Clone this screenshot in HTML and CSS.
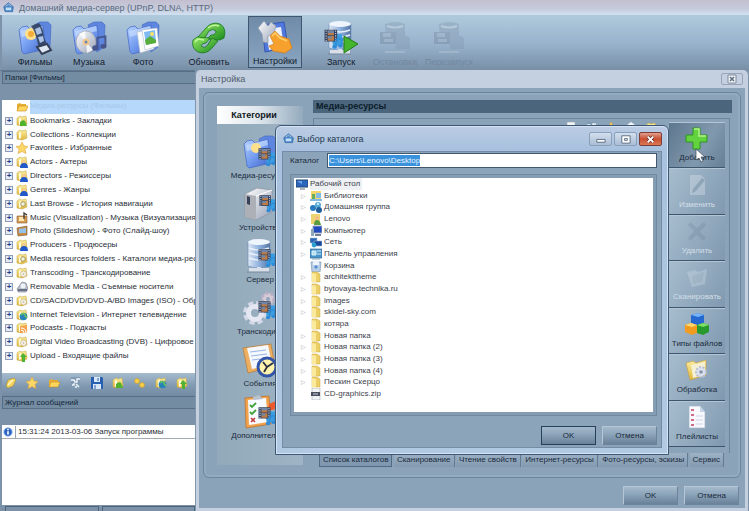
FILE: index.html
```html
<!DOCTYPE html>
<html lang="ru">
<head>
    <meta charset="UTF-8">
    <meta name="viewport" content="width=device-width, initial-scale=1.0">
    <title>Домашний медиа-сервер (UPnP, DLNA, HTTP)</title>
    <link rel="stylesheet" href="styles.css">
</head>
<body>
    <!-- Icon sprites -->
    <svg class="sprites" width="0" height="0" aria-hidden="true">
        <defs>
            <linearGradient id="gBlue" x1="0" y1="0" x2="1" y2="1"><stop offset="0" stop-color="#b9d4ff"/><stop offset=".5" stop-color="#739cf0"/><stop offset="1" stop-color="#3c5fc4"/></linearGradient>
            <linearGradient id="gGreen" x1="0" y1="0" x2="1" y2="1"><stop offset="0" stop-color="#9bec6a"/><stop offset="1" stop-color="#188a1c"/></linearGradient>
            <linearGradient id="gYellow" x1="0" y1="0" x2="0" y2="1"><stop offset="0" stop-color="#fbeea0"/><stop offset="1" stop-color="#e0b63c"/></linearGradient>
            <linearGradient id="gGrey" x1="0" y1="0" x2="1" y2="1"><stop offset="0" stop-color="#ffffff"/><stop offset="1" stop-color="#98a2b6"/></linearGradient>
            <linearGradient id="gSteel" x1="0" y1="0" x2="1" y2="0"><stop offset="0" stop-color="#dde6f2"/><stop offset=".5" stop-color="#8fb2de"/><stop offset="1" stop-color="#5474a4"/></linearGradient>
        </defs>
        <symbol id="folder" viewBox="0 0 36 36">
            <path d="M17 5l6-3 8 0 3 3-1 22-7 5z" fill="#5f86de" stroke="#4267bd" stroke-width=".6"/>
            <path d="M2 10l3-3 5-1 3 3 13-4 3 24-22 5-2-2z" fill="url(#gBlue)" stroke="#4a6dc8" stroke-width=".8"/>
            <path d="M4 11l21-5 1 5-21 6z" fill="#cfe2ff" opacity=".6"/>
        </symbol>
        <symbol id="film" viewBox="0 0 20 20">
            <path d="M2 1h16v15H2z" fill="#33405c"/>
            <path d="M6 2h8v6H6zM6 9h8v6H6z" fill="#bd7b45"/>
            <path d="M6 2h8v3H6zM6 9h5v3H6z" fill="#6c86ac"/>
            <path d="M4 2v14M16 2v14" stroke="#c9d4e6" stroke-width="1.4" stroke-dasharray="1.5 1.5"/>
        </symbol>
        <symbol id="note" viewBox="0 0 20 20">
            <path d="M8 15V3l10-2v12" fill="none" stroke="currentColor" stroke-width="2.4"/>
            <ellipse cx="5.5" cy="15.5" rx="4" ry="3.2" fill="currentColor"/>
            <ellipse cx="15.5" cy="13.5" rx="3.8" ry="3" fill="currentColor"/>
        </symbol>
        <symbol id="movies" viewBox="0 0 36 36">
            <use href="#folder"/>
            <circle cx="14" cy="14" r="6" fill="#ffe08c"/><circle cx="14" cy="14" r="3" fill="#f5ab3a"/>
            <path d="M14 6l8-3c5 6 4 10 5 14 1 4 3 6 4 9l-8 3c-3-5-2-8-4-12-1-4-2-7-5-11z" fill="#34435f" opacity=".9"/>
            <path d="M18 9l5-2 2 6-5 2zM21 17l5-1 1 5-4 2z" fill="#a9c2e6"/>
            <path d="M20 27l10-3 4 6-9 4z" fill="#dfe7f2" stroke="#35415b" stroke-width="2"/>
        </symbol>
        <symbol id="music" viewBox="0 0 36 36">
            <use href="#folder"/>
            <ellipse cx="15" cy="22" rx="10" ry="11" fill="url(#gGrey)" stroke="#9f9da5" stroke-width=".7"/>
            <path d="M15 22L8 14l6-3zM15 22l7 8-6 3z" fill="#fff" opacity=".8"/>
            <circle cx="15" cy="22" r="3.5" fill="#f3c98d"/><circle cx="15" cy="22" r="1.5" fill="#7187b5"/>
            <use href="#note" x="20" y="14" width="16" height="19" color="#46558c"/>
        </symbol>
        <symbol id="photo" viewBox="0 0 36 36">
            <use href="#folder"/>
            <path d="M12 12l15-3 2 20-14 4z" fill="#f8fafc" stroke="#aab8c8" stroke-width=".6"/>
            <path d="M17 10l15-2 2 18-14 4z" fill="#fff" stroke="#aab8c8" stroke-width=".6"/>
            <path d="M19 12l11-2 1 12-10 3z" fill="#7dbbf2"/>
            <path d="M20 20l5-4 6 4v3l-10 2z" fill="#56ad3b"/><circle cx="27" cy="14" r="2" fill="#f8e167"/>
        </symbol>
        <symbol id="refresh" viewBox="0 0 36 36">
            <path d="M15 8q6-7 14-4 7 4 4 14l-4 2-13-1 4-4q5 0 5-4-3-3-7 0l-5 8-6-2z" fill="url(#gGreen)" stroke="#167621" stroke-width=".8"/>
            <path d="M21 28q-6 7-14 4-7-4-5-12l4-3 13 1-4 5q-4 0-5 3 3 3 6 0l5-8 6 3z" fill="url(#gGreen)" stroke="#167621" stroke-width=".8"/>
            <path d="M17 8q5-4 11-2M4 22l3-3 6 1" fill="none" stroke="#c3f79c" stroke-width="1.5"/>
        </symbol>
        <symbol id="settings" viewBox="0 0 36 36">
            <path d="M5 6l22-3 4 25-23 5z" fill="#5178dc" stroke="#3658b4"/>
            <path d="M9 10l15-2 3 20-15 3z" fill="#eef4ff"/>
            <path d="M1 9l6-7 4 5 3-4 5 4-2 7-6 3v7l-5-1-1-8z" fill="url(#gGrey)" stroke="#8897ab" stroke-width=".7"/>
            <path d="M13 17l5-5 5 5 9 3 3 9-7 5-12-2-4-5 5-2z" fill="#f6a02d" stroke="#d87d18" stroke-width=".7"/>
            <path d="M15 17l3-3 5 5 7 3" fill="none" stroke="#ffd06a" stroke-width="1.5"/>
        </symbol>
        <symbol id="tower" viewBox="0 0 36 36">
            <path d="M6 4q12-4 22 0v24q-11 4-22 0z" fill="url(#gSteel)" stroke="#6889b6" stroke-width=".6"/>
            <ellipse cx="17" cy="4" rx="11" ry="3" fill="#eff5fc"/>
            <path d="M7 10q10 4 20 0M7 15q10 4 20 0M7 20q10 4 20 0" fill="none" stroke="#e8f1fc" stroke-width="1.5"/>
            <path d="M7 32h20M17 29v5" stroke="#d8dfe8" stroke-width="4"/>
            <path d="M5 34h23" stroke="#77859c"/>
        </symbol>
        <symbol id="media" viewBox="0 0 20 20">
            <path d="M8 5h10l1 8-9 5z" fill="#3a9de0"/>
            <use href="#film" width="15" height="15"/>
            <use href="#note" x="8" y="8" width="11" height="12" color="#2e8bd8"/>
        </symbol>
        <symbol id="start" viewBox="0 0 36 36">
            <use href="#tower"/><use href="#media" x="0" y="9" width="21" height="21"/>
            <path d="M21 16l14 8-14 9z" fill="#45b52d" stroke="#247c1b"/>
        </symbol>
        <symbol id="stop" viewBox="0 0 36 36">
            <g opacity=".32">
                <path d="M8 4q11-4 20 0v11l5 3v11H19v-5H9z" fill="#7e92a6"/>
                <path d="M3 12h16v12H3z" fill="#67798c"/><path d="M6 13h8v4H6zM7 19h9v3H7z" fill="#9db0c2"/>
                <path d="M8 32h20" stroke="#c9d4de" stroke-width="2"/><path d="M10 6q8 3 16 0" fill="none" stroke="#d5dee6" stroke-width="2"/>
            </g>
        </symbol>
        <symbol id="device" viewBox="0 0 36 36">
            <path d="M3 8l12-6 15 2v22l-16 8-11-3z" fill="url(#gGrey)" stroke="#8a8f9d" stroke-width=".7"/>
            <path d="M3 8l11 2v24L3 31z" fill="#aeb0b8"/><path d="M5 10l3 1v8l-3-1z" fill="#38415a"/><path d="M14 10l16-6" stroke="#fff"/>
            <use href="#media" x="16" y="8" width="19" height="20"/>
        </symbol>
        <symbol id="mediafolder" viewBox="0 0 36 36"><use href="#folder"/><circle cx="14" cy="14" r="5" fill="#ffe08c"/><use href="#media" x="15" y="13" width="20" height="21"/></symbol>
        <symbol id="server" viewBox="0 0 36 36"><use href="#tower"/><use href="#media" x="15" y="10" width="20" height="21"/></symbol>
        <symbol id="gears" viewBox="0 0 36 36">
            <circle cx="26" cy="9" r="6" fill="#d8cbd8" stroke="#b7aec4" stroke-width="3" stroke-dasharray="3 2"/><circle cx="26" cy="9" r="2" fill="#8fa6bb"/>
            <circle cx="13" cy="23" r="10" fill="none" stroke="#d4d8e8" stroke-width="4" stroke-dasharray="5 3"/>
            <circle cx="13" cy="23" r="6.5" fill="none" stroke="#e4e7f2" stroke-width="5"/>
            <use href="#media" x="15" y="10" width="20" height="21"/>
        </symbol>
        <symbol id="events" viewBox="0 0 36 36">
            <path d="M1 6l28-4 4 22-27 7z" fill="#ecae60" stroke="#ba7a35" stroke-width=".7"/>
            <path d="M5 6l21-3 4 20-20 4z" fill="#f4f8ff"/><path d="M8 10l16-2M9 14l16-2M10 18l8-1" stroke="#98b4de"/>
            <circle cx="25" cy="25" r="9" fill="#fff3ae" stroke="#3456a8" stroke-width="3"/>
            <path d="M21 20l4 5 6-4M25 25l-3 5" fill="none" stroke="#2b3040" stroke-width="1.8"/>
        </symbol>
        <symbol id="extra" viewBox="0 0 36 36">
            <path d="M3 4l24-2 2 28-25 4z" fill="#f1a24b" stroke="#bc6d25" stroke-width=".7"/>
            <path d="M6 6l18-2 2 24-19 3z" fill="#f7faff"/><path d="M11 3l6-2 4 4-10 1z" fill="#b9c2cf"/>
            <path d="M8 11l2 2 4-4M8 18l2 2 4-4" fill="none" stroke="#42a33b" stroke-width="1.8"/><path d="M9 24l4 4m0-4l-4 4" stroke="#c23434" stroke-width="1.5"/>
            <path d="M27 10l7-3v8l-8 2z" fill="#ec5a2d"/><use href="#media" x="15" y="12" width="20" height="21"/>
        </symbol>
        <symbol id="house" viewBox="0 0 16 16">
            <path d="M1 7l7-6 7 6-1 7H3z" fill="#4d86c4" stroke="#3869a5"/><path d="M4 8h8v4H4z" fill="#bfe0fa"/><path d="M4 6l4-3 4 3" fill="none" stroke="#cfe4f8"/>
        </symbol>
        <!-- Side button icons -->
        <symbol id="plus" viewBox="0 0 24 24"><path d="M8 2h7v7h7v7h-7v7H8v-7H1V9h7z" fill="#62d23e" stroke="#2d9422"/><path d="M9 3h5v7h7" fill="none" stroke="#b4f587" stroke-width="1.5"/></symbol>
        <symbol id="edit" viewBox="0 0 24 24"><g opacity=".4"><path d="M5 2h11l4 4v16H5z" fill="#d6e0ea"/><path d="M20 7l-9 11-4 2 1-4 9-11z" fill="#8699aa"/></g></symbol>
        <symbol id="remove" viewBox="0 0 24 24"><path d="M5 3l7 6 7-6 2 3-6 7 6 6-3 3-6-6-7 6-2-3 6-7-6-6z" fill="#5a7389" opacity=".2"/></symbol>
        <symbol id="scan" viewBox="0 0 24 24"><g opacity=".35"><path d="M2 7l8-2 3 2 9-3-2 15-13 3z" fill="#cfdce7"/><path d="M7 11l12-4-2 10-9 2z" fill="#b4c4d1"/></g></symbol>
        <symbol id="cubes" viewBox="0 0 24 24">
            <path d="M6 3l7-2 6 2v8l-6 3-7-3z" fill="#2568cf"/><path d="M6 3l7-2 6 2-6 2z" fill="#76b4f7"/>
            <path d="M0 13l6-2 6 2v8l-5 2-7-3z" fill="#f19c20"/><path d="M0 13l6-2 6 2-5 2z" fill="#ffd86c"/>
            <path d="M12 13l6-2 6 2v7l-6 3-6-2z" fill="#279a2d"/><path d="M12 13l6-2 6 2-6 2z" fill="#7edf62"/>
        </symbol>
        <symbol id="process" viewBox="0 0 24 24"><path d="M1 5l7-2 3 2 10-3v15L5 22z" fill="url(#gYellow)" stroke="#c99a3b" stroke-width=".6"/><path d="M6 7l14-3v13L8 20z" fill="#f5f0d4"/><circle cx="16" cy="14" r="5" fill="#dde2ef" stroke="#b8bfd2" stroke-width="2" stroke-dasharray="2 1.5"/><circle cx="16" cy="14" r="1.8" fill="#8792ad"/></symbol>
        <symbol id="playlist" viewBox="0 0 24 24"><path d="M4 1h11l5 6v16H4z" fill="#f7f9fd" stroke="#a8b5c8" stroke-width=".7"/><path d="M15 1v6h5z" fill="#c5d4e6"/><path d="M6 5h3M6 10h3M6 15h3M6 20h3" stroke="#d36a86" stroke-width="2"/><path d="M11 11h7M11 15h7M11 19h7" stroke="#cbd7ea"/></symbol>
        <!-- Small tree icons -->
        <symbol id="t-open" viewBox="0 0 12 12"><path d="M1 10V3l3-1 1 1h5v3z" fill="#e5ae34"/><path d="M1 10l2-5h9l-2 5z" fill="#ffd75e" stroke="#c88a1e" stroke-width=".6"/></symbol>
        <symbol id="t-base" viewBox="0 0 12 12"><path d="M1 3l3-2 2 1 4-1 1 8-5 2-5-1z" fill="url(#gYellow)" stroke="#c8ad4e" stroke-width=".6"/><path d="M3 4l2-1v6l-2 1z" fill="#fffbe0"/></symbol>
        <symbol id="t-mark" viewBox="0 0 12 12"><use href="#t-base"/><path d="M4 11V7q3-3 5-1l2 5z" fill="#4eb22e"/></symbol>
        <symbol id="t-star" viewBox="0 0 12 12"><path d="M6 0l2 4 4 .5-3 3 1 4-4-2-4 2 1-4-3-3L4 4z" fill="#fbd767" stroke="#e0a43c" stroke-width=".6"/></symbol>
        <symbol id="t-user" viewBox="0 0 12 12"><use href="#t-base"/><circle cx="8" cy="6" r="1.8" fill="#f1c794"/><path d="M4 12q0-5 4-5t4 5z" fill="#2058c9"/></symbol>
        <symbol id="t-tune" viewBox="0 0 12 12"><path d="M1 4h10v7H1z" fill="#d59c55" stroke="#8c5e34" stroke-width=".6"/><path d="M3 5h5v4H3z" fill="#ffe9ae"/><path d="M8 7V1l3 2" fill="none" stroke="#3d342c" stroke-width="1.3"/></symbol>
        <symbol id="t-photo" viewBox="0 0 12 12"><path d="M1 3l10-2v9l-9 1z" fill="#c88d44" stroke="#775030" stroke-width=".6"/><path d="M3 4l7-1v5H3z" fill="#91c3ed"/></symbol>
        <symbol id="t-search" viewBox="0 0 12 12"><use href="#t-base"/><circle cx="7" cy="6" r="2.3" fill="#f2f1df" stroke="#a6985d"/></symbol>
        <symbol id="t-drive" viewBox="0 0 12 12"><path d="M1 8l5-7 4 1 2 6-2 3H2z" fill="#b9bdc8" stroke="#727b8f" stroke-width=".6"/><path d="M2 9h9" stroke="#4e5a72" stroke-width="1.5"/><circle cx="7" cy="5" r="2.5" fill="#eff2f7"/></symbol>
        <symbol id="t-net" viewBox="0 0 12 12"><use href="#t-base"/><circle cx="7.5" cy="7.5" r="3.8" fill="#2682b8"/><path d="M5 6q3-3 4 0t2 2" fill="none" stroke="#70c65a" stroke-width="1.5"/></symbol>
        <symbol id="t-pod" viewBox="0 0 12 12"><use href="#t-base"/><path d="M4 4l7-1v8H4z" fill="#f6a34d"/><path d="M5 8q3 0 3 3M5 6q5 0 5 5" fill="none" stroke="#fff"/></symbol>
        <symbol id="t-disc" viewBox="0 0 12 12"><use href="#t-base"/><circle cx="7.5" cy="7" r="3" fill="#f5f0e3" stroke="#beac78" stroke-width=".6"/><circle cx="7.5" cy="7" r=".8" fill="#baa"/></symbol>
        <symbol id="t-up" viewBox="0 0 12 12"><use href="#t-base"/><path d="M4 7l3-4 4 4H9v5H6V7z" fill="#4fb234"/></symbol>
        <symbol id="t-desk" viewBox="0 0 12 12"><path d="M0 2h12v7H0z" fill="#2d67bd" stroke="#21446f"/><path d="M1 3h5v3z" fill="#6aa6ed"/><path d="M4 11h5" stroke="#5e6f85"/></symbol>
        <symbol id="t-lib" viewBox="0 0 12 12"><path d="M1 1h10v9H1z" fill="#f2d668"/><path d="M2 4h3v5H2z" fill="#66ad63"/><path d="M6 3h5v5H6z" fill="#87bce8"/><path d="M0 9h12v2H0z" fill="#81b9e5"/></symbol>
        <symbol id="t-group" viewBox="0 0 12 12"><circle cx="3" cy="7" r="3" fill="#277abd"/><circle cx="8" cy="4" r="3" fill="#51a8d2"/><circle cx="9" cy="9" r="3" fill="#1f5e9d"/><circle cx="8" cy="3" r="1.3" fill="#bbe5f5"/></symbol>
        <symbol id="t-home" viewBox="0 0 12 12"><path d="M1 1h9v10H1z" fill="#eed471"/><circle cx="7" cy="5" r="2" fill="#f4bd8a"/><path d="M4 12q0-5 3-5t4 5z" fill="#5b9b42"/></symbol>
        <symbol id="t-comp" viewBox="0 0 12 12"><path d="M3 1h9v7H3z" fill="#224bc0" stroke="#98a6bd"/><path d="M1 4h3v7H1z" fill="#8da5bd"/><path d="M5 10h6" stroke="#717f90" stroke-width="2"/></symbol>
        <symbol id="t-lan" viewBox="0 0 12 12"><path d="M0 2h7v5H0z" fill="#2c67b4" stroke="#a3bbd6" stroke-width=".6"/><path d="M4 5h8v5H4z" fill="#17489c" stroke="#a3bbd6" stroke-width=".6"/><circle cx="4" cy="9" r="2.4" fill="#2ba0ce"/></symbol>
        <symbol id="t-panel" viewBox="0 0 12 12"><path d="M0 1h12v9H0z" fill="#4b94c9" stroke="#356a99" stroke-width=".7"/><path d="M2 3h4v4H2zM7 3h4M7 6h4" fill="#bde2f3" stroke="#d5effa"/><path d="M2 11h8" stroke="#87a5b9"/></symbol>
        <symbol id="t-bin" viewBox="0 0 12 12"><path d="M1 2h10l-1 10H2z" fill="#b8cfe7" stroke="#7d99b8" stroke-width=".7"/><path d="M3 2l3-2 3 2v3H3z" fill="#eef4fa"/><path d="M4 7l2-2 2 2-2 2z" fill="#558fd2"/></symbol>
        <symbol id="t-dir" viewBox="0 0 12 12"><path d="M2 1h5l3 2v8H2z" fill="#ecd067" stroke="#cba846" stroke-width=".5"/><path d="M2 2l4 1v8H2z" fill="#fbe99c"/></symbol>
        <symbol id="t-zip" viewBox="0 0 12 12"><path d="M2 0h8v12H2z" fill="#f3f4f6" stroke="#a6acb5" stroke-width=".6"/><path d="M1 4h9v4H1z" fill="#4b5060"/><path d="M3 6h5" stroke="#c9ced8"/></symbol>
        <symbol id="s-save" viewBox="0 0 12 12"><path d="M0 0h11l1 1v11H0z" fill="#2861b2"/><path d="M3 0h6v5H3zM2 7h8v5H2z" fill="#d9e7f7"/><path d="M7 1v3M4 8v4" stroke="#2861b2"/></symbol>
        <symbol id="s-check" viewBox="0 0 12 12"><path d="M2 0h9v12H2z" fill="#7f9ab3"/><path d="M2 3h3l1 2h2V2h3M3 8h2V6M7 7l3 3M6 10h2" stroke="#f1f6fb" stroke-width="1.4" fill="none"/></symbol>
        <symbol id="s-pencil" viewBox="0 0 12 12"><path d="M1 9l2-6 6-2 2 2-3 6-5 2z" fill="#f2d35e" stroke="#a58b32" stroke-width=".6"/><path d="M3 8l5-5" stroke="#fff7cc" stroke-width="1.5"/></symbol>
        <symbol id="s-links" viewBox="0 0 12 12"><circle cx="4" cy="4" r="2.5" fill="#f6cf4a" stroke="#c9982a" stroke-width=".6"/><circle cx="9" cy="8" r="2.5" fill="#f6cf4a" stroke="#c9982a" stroke-width=".6"/></symbol>
    </svg>

    <div class="app">
        <header class="titlebar">
            <svg class="i10"><use href="#house"/></svg>
            <span>Домашний медиа-сервер (UPnP, DLNA, HTTP)</span>
        </header>

        <nav class="toolbar">
            <div class="tool-group">
                <button class="tool"><svg><use href="#movies"/></svg>Фильмы</button>
                <button class="tool"><svg><use href="#music"/></svg>Музыка</button>
                <button class="tool"><svg><use href="#photo"/></svg>Фото</button>
            </div>
            <div class="tool-group">
                <button class="tool"><svg><use href="#refresh"/></svg>Обновить</button>
            </div>
            <div class="tool-group">
                <button class="tool active"><svg><use href="#settings"/></svg>Настройки</button>
            </div>
            <div class="tool-group">
                <button class="tool"><svg><use href="#start"/></svg>Запуск</button>
                <button class="tool" disabled><svg><use href="#stop"/></svg>Остановка</button>
                <button class="tool" disabled><svg><use href="#stop"/></svg>Перезапуск</button>
            </div>
        </nav>

        <aside class="sidebar">
            <h2 class="panel-title">Папки [Фильмы]</h2>
            <ul class="media-tree">
                <li class="selected"><i></i><svg><use href="#t-open"/></svg><span class="faded">Медиа-ресурсы (Фильмы)</span></li>
                <li><button class="expand">+</button><svg><use href="#t-mark"/></svg><span>Bookmarks - Закладки</span></li>
                <li><button class="expand">+</button><svg><use href="#t-base"/></svg><span>Collections - Коллекции</span></li>
                <li><button class="expand">+</button><svg><use href="#t-star"/></svg><span>Favorites - Избранные</span></li>
                <li><button class="expand">+</button><svg><use href="#t-user"/></svg><span>Actors - Актеры</span></li>
                <li><button class="expand">+</button><svg><use href="#t-user"/></svg><span>Directors - Режиссеры</span></li>
                <li><button class="expand">+</button><svg><use href="#t-user"/></svg><span>Genres - Жанры</span></li>
                <li><button class="expand">+</button><svg><use href="#t-search"/></svg><span>Last Browse - История навигации</span></li>
                <li><button class="expand">+</button><svg><use href="#t-tune"/></svg><span>Music (Visualization) - Музыка (Визуализация)</span></li>
                <li><button class="expand">+</button><svg><use href="#t-photo"/></svg><span>Photo (Slideshow) - Фото (Слайд-шоу)</span></li>
                <li><button class="expand">+</button><svg><use href="#t-user"/></svg><span>Producers - Продюсеры</span></li>
                <li><button class="expand">+</button><svg><use href="#t-search"/></svg><span>Media resources folders - Каталоги медиа-ресурсов</span></li>
                <li><button class="expand">+</button><svg><use href="#t-disc"/></svg><span>Transcoding - Транскодирование</span></li>
                <li><button class="expand">+</button><svg><use href="#t-drive"/></svg><span>Removable Media - Съемные носители</span></li>
                <li><button class="expand">+</button><svg><use href="#t-disc"/></svg><span>CD/SACD/DVD/DVD-A/BD Images (ISO) - Образы</span></li>
                <li><button class="expand">+</button><svg><use href="#t-net"/></svg><span>Internet Television - Интернет телевидение</span></li>
                <li><button class="expand">+</button><svg><use href="#t-pod"/></svg><span>Podcasts - Подкасты</span></li>
                <li><button class="expand">+</button><svg><use href="#t-disc"/></svg><span>Digital Video Broadcasting (DVB) - Цифровое телевидение</span></li>
                <li><button class="expand">+</button><svg><use href="#t-up"/></svg><span>Upload - Входящие файлы</span></li>
            </ul>
            <div class="mini-bar">
                <button aria-label="Изменить"><svg><use href="#s-pencil"/></svg></button>
                <button aria-label="Избранное"><svg><use href="#t-star"/></svg></button>
                <button aria-label="Каталог"><svg><use href="#t-open"/></svg></button>
                <button aria-label="Отметить"><svg><use href="#s-check"/></svg></button>
                <button aria-label="Сохранить"><svg><use href="#s-save"/></svg></button>
                <button aria-label="Загрузить"><svg><use href="#t-mark"/></svg></button>
                <button aria-label="Связать"><svg><use href="#s-links"/></svg></button>
                <button aria-label="Сеть"><svg><use href="#t-net"/></svg></button>
                <button aria-label="Вверх"><svg><use href="#t-up"/></svg></button>
            </div>
            <h2 class="panel-title">Журнал сообщений</h2>
            <div class="log">
                <div class="log-row">
                    <svg viewBox="0 0 12 12"><circle cx="6" cy="6" r="5" fill="#2b63c2" stroke="#8fb4ec"/><path d="M6 5v4M6 2v2" stroke="#fff" stroke-width="2"/></svg>
                    <span>15:31:24 2013-03-06 Запуск программы</span>
                </div>
            </div>
            <div class="log-tabs"><i></i><i></i></div>
        </aside>
    </div>

    <section class="window settings">
        <header class="window-title">
            <span>Настройка</span>
            <button class="close-flat" aria-label="Закрыть"><svg viewBox="0 0 20 10"><path d="M6 1h8v8H6z" fill="#f2f4f8" stroke="#7e8c9f"/><path d="M8 3l4 4m0-4l-4 4" stroke="#5d6c80" stroke-width="1.5"/></svg></button>
        </header>
        <div class="settings-body">
            <div class="settings-frame">
                <nav class="categories">
                    <h3>Категории</h3>
                    <button><svg><use href="#mediafolder"/></svg>Медиа-ресурсы</button>
                    <button><svg><use href="#device"/></svg>Устройства</button>
                    <button><svg><use href="#server"/></svg>Сервер</button>
                    <button><svg><use href="#gears"/></svg>Транскодинг</button>
                    <button><svg><use href="#events"/></svg>События</button>
                    <button><svg><use href="#extra"/></svg>Дополнительно</button>
                </nav>
                <div class="resources">
                    <h3>Медиа-ресурсы</h3>
                    <div class="resources-panel">
                        <div class="resource-list">
                            <svg><use href="#t-zip"/></svg>
                            <svg><use href="#s-check"/></svg>
                            <svg><use href="#t-star"/></svg>
                            <svg><use href="#t-bin"/></svg>
                            <svg><use href="#t-base"/></svg>
                        </div>
                        <div class="side-buttons">
                            <button class="hot"><svg><use href="#plus"/></svg>Добавить</button>
                            <button disabled><svg><use href="#edit"/></svg>Изменить</button>
                            <button disabled><svg><use href="#remove"/></svg>Удалить</button>
                            <button disabled><svg><use href="#scan"/></svg>Сканировать</button>
                            <button><svg><use href="#cubes"/></svg>Типы файлов</button>
                            <button><svg><use href="#process"/></svg>Обработка</button>
                            <button><svg><use href="#playlist"/></svg>Плейлисты</button>
                        </div>
                    </div>
                    <div class="tabs">
                        <button class="current">Список каталогов</button>
                        <button>Сканирование</button>
                        <button>Чтение свойств</button>
                        <button>Интернет-ресурсы</button>
                        <button>Фото-ресурсы, эскизы</button>
                        <button>Сервис</button>
                    </div>
                </div>
            </div>
            <div class="actions">
                <button class="btn">OK</button>
                <button class="btn">Отмена</button>
            </div>
        </div>
    </section>

    <section class="window catalog">
        <header class="window-title">
            <svg class="i10"><use href="#house"/></svg>
            <span>Выбор каталога</span>
            <div class="win-buttons">
                <button aria-label="Свернуть"><svg viewBox="0 0 22 13"><path d="M7 7h9v3H7z" fill="#fff" stroke="#586b82"/></svg></button>
                <button aria-label="Развернуть"><svg viewBox="0 0 22 13"><path d="M7 3h9v8H7zM10 6h3v2h-3z" fill="#fff" stroke="#586b82"/></svg></button>
                <button class="red" aria-label="Закрыть"><svg viewBox="0 0 22 13"><path d="M8 4l6 6m0-6l-6 6" stroke="#5a2a26" stroke-width="3.5"/><path d="M8 4l6 6m0-6l-6 6" stroke="#fff" stroke-width="2"/></svg></button>
            </div>
        </header>
        <div class="catalog-body">
            <div class="path-row">
                <label for="path">Каталог</label>
                <div class="path-box"><input id="path" type="text" value="C:\Users\Lenovo\Desktop"></div>
            </div>
            <div class="dir-frame">
                <ul class="dir-tree">
                    <li class="root"><svg><use href="#t-desk"/></svg><span>Рабочий стол</span></li>
                    <li><i class="arrow"></i><svg><use href="#t-lib"/></svg><span>Библиотеки</span></li>
                    <li><i class="arrow"></i><svg><use href="#t-group"/></svg><span>Домашняя группа</span></li>
                    <li><i class="arrow"></i><svg><use href="#t-home"/></svg><span>Lenovo</span></li>
                    <li><i class="arrow"></i><svg><use href="#t-comp"/></svg><span>Компьютер</span></li>
                    <li><i class="arrow"></i><svg><use href="#t-lan"/></svg><span>Сеть</span></li>
                    <li><i class="arrow"></i><svg><use href="#t-panel"/></svg><span>Панель управления</span></li>
                    <li><i></i><svg><use href="#t-bin"/></svg><span>Корзина</span></li>
                    <li><i class="arrow"></i><svg><use href="#t-dir"/></svg><span>architekttheme</span></li>
                    <li><i class="arrow"></i><svg><use href="#t-dir"/></svg><span>bytovaya-technika.ru</span></li>
                    <li><i class="arrow"></i><svg><use href="#t-dir"/></svg><span>images</span></li>
                    <li><i class="arrow"></i><svg><use href="#t-dir"/></svg><span>skidel-sky.com</span></li>
                    <li><i></i><svg><use href="#t-dir"/></svg><span>котяра</span></li>
                    <li><i class="arrow"></i><svg><use href="#t-dir"/></svg><span>Новая папка</span></li>
                    <li><i class="arrow"></i><svg><use href="#t-dir"/></svg><span>Новая папка (2)</span></li>
                    <li><i class="arrow"></i><svg><use href="#t-dir"/></svg><span>Новая папка (3)</span></li>
                    <li><i class="arrow"></i><svg><use href="#t-dir"/></svg><span>Новая папка (4)</span></li>
                    <li><i class="arrow"></i><svg><use href="#t-dir"/></svg><span>Пескин Скерцо</span></li>
                    <li><i></i><svg><use href="#t-zip"/></svg><span>CD-graphics.zip</span></li>
                </ul>
            </div>
            <div class="actions">
                <button class="btn default">OK</button>
                <button class="btn">Отмена</button>
            </div>
        </div>
    </section>

    <svg class="pointer" viewBox="0 0 10 15"><path d="M1 1v11l3-2 2 4 2-1-2-4h4z" fill="#fff" stroke="#39475a" stroke-width=".7"/></svg>

    <script>
        // The path is selected when the dialog opens
        const path = document.getElementById('path');
        path.focus();
        path.select();
    </script>
</body>
</html>
```
FILE: styles.css
```css
* {
    box-sizing: border-box;
}

body {
    margin: 0;
    height: 100vh;
    overflow: hidden;
    position: relative;
    font-family: "Liberation Sans", Arial, sans-serif;
    font-size: 8px;
    line-height: 12px;
    color: #1b2a3c;
    background-color: #7b93a9;
}

button {
    font: inherit;
    color: inherit;
    padding: 0;
    margin: 0;
    border: none;
    background: none;
}

h2,
h3,
ul {
    margin: 0;
    padding: 0;
    list-style: none;
    font-size: inherit;
    font-weight: normal;
}

span {
    white-space: nowrap;
}

.sprites {
    position: absolute;
}

.i10 {
    width: 11px;
    height: 11px;
    flex: none;
}

/* Main window */
.app {
    height: 100%;
    display: flex;
    flex-direction: column;
}

.titlebar {
    display: flex;
    align-items: center;
    gap: 5px;
    height: 15px;
    padding-left: 3px;
    font-size: 9px;
    color: #596b80;
    background: linear-gradient(#c3bfd0, #c6cbdc 60%, #d2e2f2);
}

.toolbar {
    display: flex;
    gap: 12px;
    height: 55px;
    padding: 1px 0 2px 8px;
    font-size: 9px;
    background: linear-gradient(#afc9dc, #9ab4cf 50%, #7890a6);
    border-left: 2px solid #7c93aa;
}

.tool-group {
    display: flex;
}

.toolbar .tool-group:first-child {
    margin-left: -2px;
}

.tool {
    width: 54px;
    display: flex;
    flex-direction: column;
    align-items: center;
    justify-content: flex-end;
    color: #14202f;
}

.tool svg {
    width: 36px;
    height: 36px;
}

.tool.active {
    border: 1px solid #40566f;
    background: linear-gradient(#6f8ba8, #7f9bb8 60%, #8ba5be);
}

.tool:disabled {
    color: #7288a0;
}

.sidebar {
    flex: 1;
    min-height: 0;
    width: 195px;
    padding-left: 2px;
    display: flex;
    flex-direction: column;
    background-color: #7b92a8;
    border-top: 1px solid #61788e;
}

.panel-title {
    height: 13px;
    margin-bottom: 16px;
    padding-left: 2px;
    border: 1px solid #566e86;
    border-right: none;
    line-height: 11px;
    color: #15283c;
    background-color: #748ca2;
}

.media-tree {
    flex: 1;
    min-height: 0;
    display: grid;
    grid-auto-rows: 1fr;
    padding-bottom: 10px;
    background-color: #fff;
    color: #2a2f38;
    overflow: hidden;
}

.media-tree li {
    display: flex;
    align-items: center;
    min-height: 0;
    padding-left: 3px;
}

.media-tree svg {
    width: 12px;
    height: 12px;
    margin: 0 2px 0 3px;
    flex: none;
}

.media-tree li i {
    width: 8px;
    flex: none;
}

.selected span {
    flex: 1;
    align-self: stretch;
    background-color: #b6d8fb;
}

.faded {
    color: #a6c8e8;
}

.expand {
    width: 8px;
    height: 8px;
    flex: none;
    border: 1px solid #8f9db8;
    background-color: #e6eaf5;
    color: #213b80;
    line-height: 6px;
    font-weight: bold;
}

.mini-bar {
    display: flex;
    justify-content: space-between;
    align-items: center;
    height: 23px;
    padding: 0 7px 4px 3px;
    background: linear-gradient(#a5bbce, #7f98b0 60%, #738ba2);
}

.mini-bar svg {
    display: block;
    width: 12px;
    height: 12px;
}

.log {
    height: 80px;
    background-color: #fff;
    color: #2a2f38;
}

.log-row {
    display: flex;
    align-items: center;
    height: 14px;
    border-bottom: 1px solid #a4aab2;
}

.log-row svg {
    width: 10px;
    height: 10px;
    margin: 0 2px 0 1px;
}

.log-row span {
    padding-left: 2px;
    border-left: 1px solid #9aa3ae;
}

.log-tabs {
    display: flex;
    gap: 3px;
    height: 6px;
    padding: 1px 0 0 3px;
}

.log-tabs i {
    flex: 1;
    border: 1px solid #4d647b;
    border-bottom: none;
}

/* Windows */
.window {
    position: absolute;
    display: flex;
    flex-direction: column;
}

.window-title {
    display: flex;
    align-items: center;
    gap: 5px;
    flex: none;
    font-size: 9px;
}

.settings {
    top: 70px;
    left: 195px;
    right: 1px;
    bottom: 0;
    padding: 0 3px 3px;
    background-color: #c4cfdf;
    border-left: 1px solid #8195ab;
    border-radius: 5px 5px 0 0;
}

.settings .window-title {
    justify-content: space-between;
    height: 18px;
    padding: 0 2px;
    color: #4f5c6c;
}

.close-flat {
    width: 22px;
    height: 12px;
    border: 1px solid #98a5b8;
    border-radius: 2px;
}

.close-flat svg {
    display: block;
    width: 20px;
    height: 10px;
}

.settings-body {
    flex: 1;
    min-height: 0;
    display: flex;
    flex-direction: column;
    padding: 4px 4px 0;
    background-color: #8ba3b8;
}

.settings-frame {
    flex: 1;
    min-height: 0;
    display: flex;
    gap: 10px;
    padding: 7px 8px 10px 13px;
    border: 1px solid #6d859c;
    border-radius: 6px;
    box-shadow: inset 0 0 0 2px #93abbf;
}

.categories {
    width: 86px;
    flex: none;
    margin: 6px 0 2px;
    display: flex;
    flex-direction: column;
    background: linear-gradient(90deg, #91a9b9, #9fb4c4);
}

.categories h3 {
    height: 18px;
    margin-bottom: 8px;
    padding-right: 12px;
    font-size: 9px;
    line-height: 18px;
    font-weight: bold;
    text-align: center;
    color: #101820;
    background: linear-gradient(90deg, #fff, #dde5ec 50%, #93aabd);
}

.categories button {
    height: 52px;
    flex: none;
    display: flex;
    flex-direction: column;
    align-items: center;
    justify-content: center;
    white-space: nowrap;
}

.categories svg {
    width: 36px;
    height: 36px;
}

.resources {
    flex: 1;
    min-width: 0;
    display: flex;
    flex-direction: column;
}

.resources h3 {
    height: 13px;
    margin-bottom: 5px;
    padding-left: 3px;
    font-size: 9px;
    line-height: 13px;
    font-weight: bold;
    color: #0c1c2b;
    background-color: #4b667c;
}

.resources-panel {
    flex: 1;
    min-height: 0;
    display: flex;
    padding: 3px 4px 0;
    margin-right: 2px;
    border: 1px solid #6d859c;
    border-bottom: none;
}

.resource-list {
    flex: 1;
    display: flex;
    justify-content: flex-end;
    gap: 8px;
    padding-right: 12px;
}

.resource-list svg {
    width: 12px;
    height: 12px;
}

.side-buttons {
    width: 56px;
    display: grid;
    grid-auto-rows: 1fr;
    margin-bottom: 6px;
}

.side-buttons button {
    display: flex;
    flex-direction: column;
    align-items: center;
    justify-content: center;
    gap: 2px;
    border-top: 1px solid #b2c6d6;
    border-bottom: 1px solid #3f576e;
    background: linear-gradient(120deg, #a7bdce, #8099b0);
    white-space: nowrap;
}

.side-buttons svg {
    width: 24px;
    height: 24px;
}

.side-buttons .hot {
    background: linear-gradient(120deg, #5d778e, #8199ae 60%, #677f95);
}

.side-buttons button:disabled {
    color: #d3dfe9;
}

.tabs {
    display: flex;
    height: 14px;
    padding: 0 8px 0 6px;
    justify-content: space-between;
}

.tabs button {
    padding: 0 3px;
    line-height: 12px;
    white-space: nowrap;
    border-right: 1px solid #647c93;
    background: linear-gradient(#9db2c5, #8299af);
}

.tabs .current {
    border: 1px solid #526b84;
    border-top: none;
    background: #8199b0;
}

.actions {
    display: flex;
    justify-content: flex-end;
    gap: 6px;
    flex: none;
}

.settings .actions {
    padding: 8px 2px 3px;
}

.btn {
    width: 55px;
    height: 19px;
    border: 1px solid #6c849b;
    border-top-color: #b5c7d7;
    border-left-color: #b5c7d7;
    background: linear-gradient(#a4b9cb, #8ba3b9 45%, #6a8299);
}

.btn.default {
    border: 1px solid #27405a;
}

/* Catalog dialog */
.catalog {
    top: 125px;
    left: 275px;
    right: 80px;
    bottom: 56px;
    padding: 0 6px 6px;
    border: 1px solid #3d5774;
    border-radius: 6px 6px 0 0;
    background-color: #abc4e0;
    background-image: linear-gradient(#bccde4, #a7c1de 24px, #b1c9e2);
    box-shadow: inset 0 0 0 1px #d4e3f2;
}

.catalog .window-title {
    height: 25px;
    padding: 0 0 0 1px;
    gap: 3px;
    color: #25384e;
}

.win-buttons {
    display: flex;
    gap: 2px;
    margin-left: auto;
}

.win-buttons button {
    height: 14px;
    border: 1px solid #8a9fb9;
    border-radius: 2px;
    background: linear-gradient(#d3dfed, #aabdd4);
}

.win-buttons svg {
    display: block;
    width: 21px;
    height: 12px;
}

.win-buttons .red {
    border-color: #7c3c38;
    background: linear-gradient(#e2a08f, #c94d30 50%, #d97a55);
}

.catalog-body {
    flex: 1;
    min-height: 0;
    display: flex;
    flex-direction: column;
    padding: 1px 4px 2px 7px;
    background-color: #8ca4ba;
    border: 1px solid #748ca5;
}

.path-row {
    display: flex;
    align-items: center;
    flex: none;
}

.path-row label {
    width: 37px;
}

.path-box {
    flex: 1;
    height: 15px;
    padding: 1px;
    border: 1px solid #41586f;
    background-color: #fff;
}

.path-box input {
    display: block;
    width: 100%;
    height: 11px;
    padding: 0;
    border: none;
    outline: none;
    font: inherit;
    line-height: 11px;
}

.path-box input::selection {
    background-color: #3a92dc;
    color: #e8f4ff;
}

.dir-frame {
    flex: 1;
    min-height: 0;
    display: flex;
    margin: 6px 0 10px;
    padding: 3px;
    border: 1px solid #71899f;
    background-color: #859db3;
}

.dir-tree {
    flex: 1;
    display: grid;
    grid-auto-rows: 1fr;
    padding: 0 0 12px 2px;
    background-color: #fff;
    color: #3c424c;
    overflow: hidden;
}

.dir-tree li {
    display: flex;
    align-items: center;
    min-height: 0;
    padding-left: 5px;
}

.dir-tree svg {
    width: 12px;
    height: 12px;
    margin-right: 2px;
    flex: none;
}

.dir-tree i {
    width: 9px;
    flex: none;
    font-style: normal;
    font-size: 6px;
    line-height: 8px;
    color: #a2a8b1;
}

.dir-tree .arrow::before {
    content: "\25B7";
}

.dir-tree .root {
    padding-left: 0;
}

.root span {
    padding-right: 2px;
    background-color: #eef0f3;
}

.pointer {
    position: absolute;
    top: 148px;
    left: 695px;
    width: 10px;
    height: 15px;
}
```
